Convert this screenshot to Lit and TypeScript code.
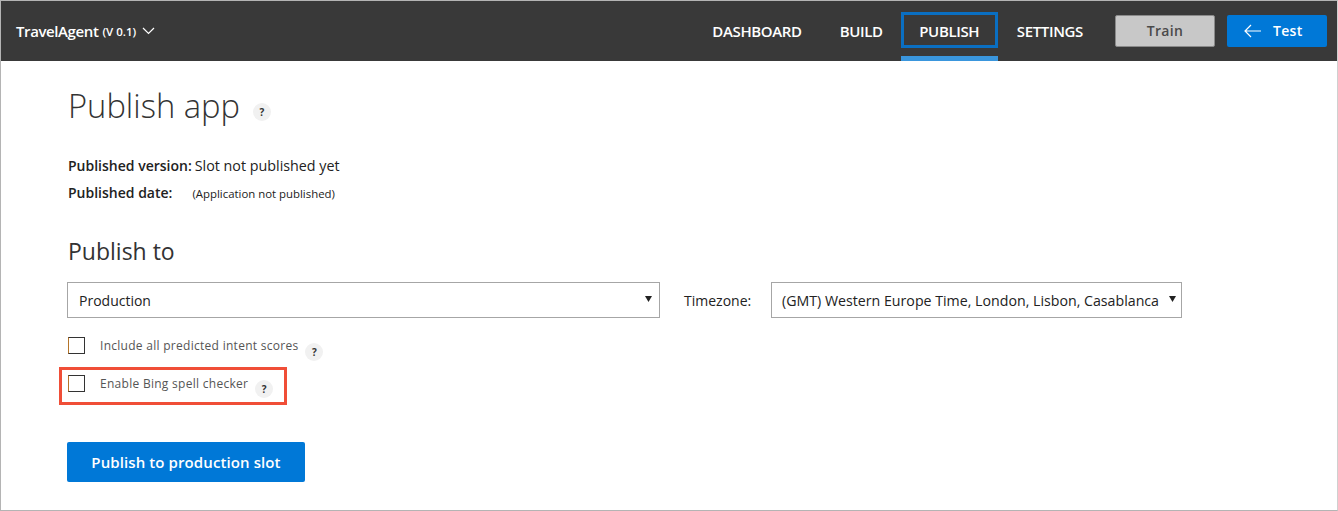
import { LitElement, html, css } from "lit";
import { customElement } from "lit/decorators.js";

const help = () => html`<span class="help">?</span>`;
const arrow = html`<svg class="arrow" width="7" height="7" viewBox="0 0 7 7"><path d="M0 1h7L3.5 7z" fill="#222"></path></svg>`;

@customElement("app-root")
export class AppRoot extends LitElement {
  static styles = css`
    :host {
      display: block;
      font-family: "Open Sans", "Noto Sans", sans-serif;
      color: #222;
    }

    .frame {
      box-sizing: border-box;
      height: 511px;
      border: 1px solid #b4b4b4;
      border-right-color: #d0d0d0;
      overflow: hidden;
    }

    header {
      display: flex;
      align-items: flex-start;
      height: 60px;
      background: #393939;
      color: #fff;
    }

    .brand {
      display: flex;
      align-items: center;
      height: 60px;
      margin-left: 15px;
      font-size: 15px;
      font-weight: 600;
      letter-spacing: -0.4px;
    }

    .brand small {
      margin-left: 4px;
      font-size: 11.5px;
      letter-spacing: 0;
    }

    .brand svg {
      margin-left: 6px;
    }

    nav {
      display: flex;
      margin-left: auto;
      height: 60px;
    }

    nav a {
      position: relative;
      box-sizing: border-box;
      height: 36px;
      margin-top: 11px;
      line-height: 38px;
      font-size: 15px;
      font-weight: 600;
      letter-spacing: -0.35px;
    }

    nav a.dash { margin-right: 38px; }
    nav a.build { margin-right: 18px; }
    nav a.settings { margin-left: 19px; margin-right: 32px; }

    nav a.active {
      width: 97px;
      border: 3px solid #0a6fc2;
      line-height: 32px;
      text-align: center;
    }

    nav a.active::after {
      content: "";
      position: absolute;
      left: -3px;
      right: -3px;
      top: 41px;
      height: 5px;
      background: #3a96dd;
    }

    .btn {
      box-sizing: border-box;
      display: flex;
      align-items: center;
      justify-content: center;
      height: 32px;
      margin-top: 14px;
      padding-bottom: 2px;
      border-radius: 2px;
      font-size: 14px;
      font-weight: 600;
      letter-spacing: 0.3px;
    }

    .train {
      width: 100px;
      background: #c8c8c8;
      border: 1px solid #8a8a8a;
      color: #4a4a4a;
    }

    .test {
      width: 100px;
      margin: 14px 10px 0 12px;
      padding-left: 17px;
      justify-content: flex-start;
      background: #0078d7;
      color: #fff;
      gap: 12px;
    }

    .test svg {
      margin-top: 2px;
    }

    main {
      padding: 23px 0 0 66px;
    }

    h1 {
      display: flex;
      align-items: flex-start;
      margin: 0 0 24px 1px;
      height: 44px;
      line-height: 44px;
      font-size: 32.7px;
      font-weight: 300;
      color: #333;
    }

    .help {
      display: inline-flex;
      align-items: center;
      justify-content: center;
      flex: none;
      width: 18px;
      height: 18px;
      border-radius: 50%;
      background: #f1f1f1;
      color: #333;
      font-size: 10px;
      font-weight: 700;
    }

    h1 .help {
      margin: 19px 0 0 13px;
    }

    .meta {
      display: flex;
      align-items: center;
      height: 27px;
      margin-left: 1px;
      font-size: 14.3px;
      color: #222;
    }

    .meta b {
      font-size: 14px;
      font-weight: 600;
      margin-right: 3px;
    }

    .meta small {
      margin-left: 17px;
      padding-top: 2px;
      font-size: 11.4px;
    }

    h2 {
      margin: 29px 0 15px 1px;
      height: 32px;
      line-height: 32px;
      font-size: 23px;
      font-weight: 400;
      color: #333;
    }

    .selects {
      display: flex;
      align-items: center;
      height: 36px;
    }

    .select {
      box-sizing: border-box;
      display: flex;
      align-items: center;
      justify-content: space-between;
      height: 36px;
      border: 1px solid #a6a6a6;
      background: #fff;
      font-size: 14px;
    }

    .select.slot {
      width: 593px;
      padding: 0 7px 0 11px;
    }

    .select.zone {
      width: 411px;
      padding: 0 5px 0 10px;
      font-size: 14.2px;
    }

    .arrow {
      margin-bottom: 3px;
    }

    .tz {
      width: 111px;
      padding-left: 24px;
      box-sizing: border-box;
      font-size: 14px;
    }

    .check {
      box-sizing: border-box;
      display: flex;
      align-items: flex-start;
      width: 228px;
      height: 38px;
      margin-left: -8px;
      padding: 4px 0 0 6px;
      border: 3px solid transparent;
      font-size: 12px;
      letter-spacing: 0.28px;
      color: #555;
    }

    .check.first {
      width: 300px;
      margin-top: 11px;
    }

    .check.flagged {
      border-color: #f04e37;
    }

    .box {
      box-sizing: border-box;
      flex: none;
      width: 17px;
      height: 17px;
      margin-top: 1px;
      border: 1px solid #333;
      border-left-color: #b5752a;
      background: #fff;
    }

    .check label {
      margin-top: 1px;
      margin-left: 15px;
      line-height: 18px;
    }

    .check .help {
      margin: 7px 0 0 7px;
    }

    .check.flagged .help {
      margin-top: 6px;
    }

    .publish {
      box-sizing: border-box;
      display: flex;
      align-items: center;
      justify-content: center;
      width: 238px;
      height: 40px;
      margin-top: 37px;
      border-radius: 2px;
      background: #0078d7;
      color: #fff;
      font-size: 15px;
      font-weight: 600;
      letter-spacing: 0.1px;
    }
  `;

  render() {
    return html`
      <div class="frame">
        <header>
          <div class="brand">
            TravelAgent <small>(V 0.1)</small>
            <svg width="13" height="8" viewBox="0 0 13 8"><path d="M1 1l5.5 5.5L12 1" fill="none" stroke="#fff" stroke-width="1.2"></path></svg>
          </div>
          <nav>
            <a class="dash">DASHBOARD</a>
            <a class="build">BUILD</a>
            <a class="active">PUBLISH</a>
            <a class="settings">SETTINGS</a>
          </nav>
          <div class="btn train">Train</div>
          <div class="btn test">
            <svg width="17" height="14" viewBox="0 0 17 14"><path d="M7 1L1 7l6 6M1 7h16" fill="none" stroke="#fff" stroke-width="1.2"></path></svg>
            Test
          </div>
        </header>
        <main>
          <h1>Publish app ${help()}</h1>
          <div class="meta"><b>Published version:</b> Slot not published yet</div>
          <div class="meta"><b>Published date:</b> <small>(Application not published)</small></div>
          <h2>Publish to</h2>
          <div class="selects">
            <div class="select slot">Production ${arrow}</div>
            <div class="tz">Timezone:</div>
            <div class="select zone">(GMT) Western Europe Time, London, Lisbon, Casablanca ${arrow}</div>
          </div>
          <div class="check first">
            <span class="box"></span><label>Include all predicted intent scores</label>${help()}
          </div>
          <div class="check flagged">
            <span class="box"></span><label>Enable Bing spell checker</label>${help()}
          </div>
          <div class="publish">Publish to production slot</div>
        </main>
      </div>
    `;
  }
}
